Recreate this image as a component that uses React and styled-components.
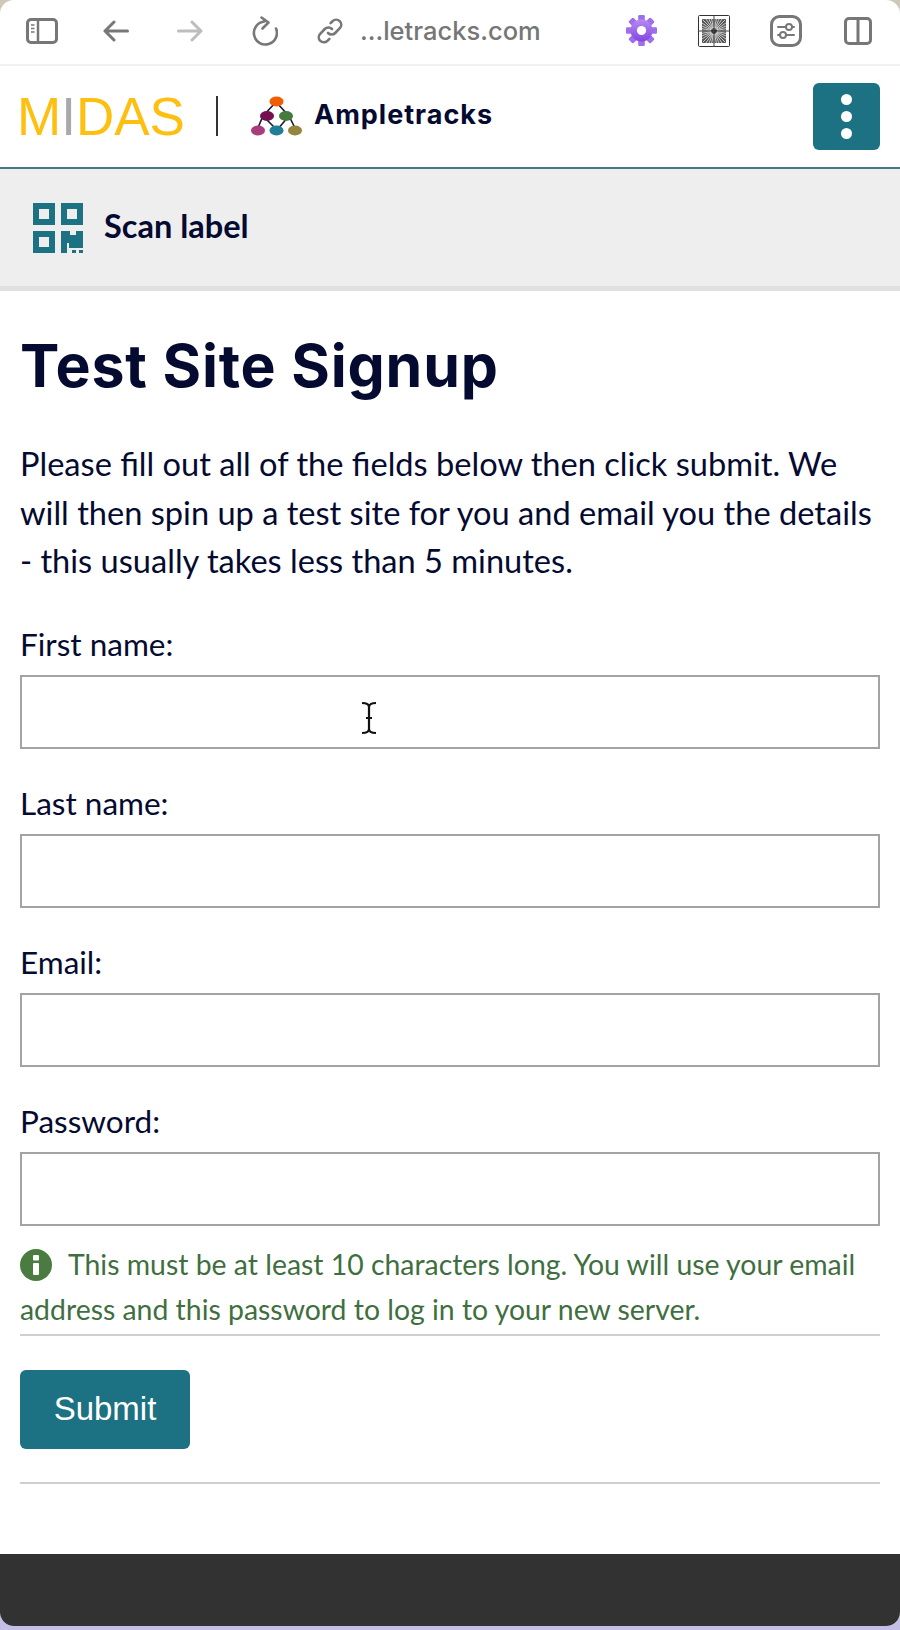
import React from "react";
import styled, { createGlobalStyle } from "styled-components";

const teal = "#1c7182";
const navy = "#050a30";

const GlobalStyle = createGlobalStyle`
  * { box-sizing: border-box; }
  html, body { margin: 0; padding: 0; height: 100%; }
  body {
    background: linear-gradient(to bottom, #cfc8b8 0, #cfd0cc 30px, #c4bfe6 1600px);
    font-family: Lato, sans-serif;
  }
`;

const Win = styled.div`
  width: 900px;
  height: 1626px;
  background: #fff;
  border-radius: 14px;
  overflow: hidden;
  display: flex;
  flex-direction: column;
`;

const Toolbar = styled.div`
  height: 66px;
  flex: none;
  display: flex;
  align-items: center;
  padding: 0 28px 3px 26px;
  border-bottom: 2px solid #f1f1f1;
`;

const ToolIcon = styled.svg`
  flex: none;
  margin-left: ${(p) => p.$gap || 0}px;
  display: block;
`;

const UrlText = styled.span`
  margin-left: 17px;
  font-family: Inter, sans-serif;
  font-size: 25.5px;
  font-weight: 500;
  color: #767676;
`;

const ToolRight = styled.div`
  margin-left: auto;
  display: flex;
  align-items: center;
`;

const Header = styled.header`
  height: 103px;
  flex: none;
  display: flex;
  align-items: center;
  padding: 0 20px 1px;
  border-bottom: 2px solid #3f7c86;
`;

const Midas = styled.div`
  font-family: "Liberation Sans", sans-serif;
  font-size: 53px;
  line-height: 1;
  color: #fdc010;
  width: 164px;
  margin-left: -3px;
  white-space: nowrap;
`;

const MidasI = styled.span`
  color: #a9a9a9;
`;

const Divider = styled.div`
  width: 2px;
  height: 40px;
  background: #333;
  margin-left: 35px;
`;

const LogoMark = styled.svg`
  margin-left: 33px;
  flex: none;
`;

const Brand = styled.span`
  margin-left: 12px;
  font-family: Inter, sans-serif;
  font-weight: 700;
  font-size: 27px;
  letter-spacing: 1px;
  margin-top: -3px;
  color: ${navy};
`;

const MenuButton = styled.button`
  margin-left: auto;
  width: 67px;
  height: 67px;
  border: 0;
  border-radius: 6px;
  background: ${teal};
  display: flex;
  flex-direction: column;
  align-items: center;
  justify-content: center;
  gap: 6px;
  padding: 0;
`;

const Dot = styled.span`
  width: 11px;
  height: 11px;
  border-radius: 50%;
  background: #fff;
`;

const ScanBar = styled.div`
  height: 122px;
  flex: none;
  background: #eeeeef;
  border-bottom: 5px solid #e0e0e0;
  display: flex;
  align-items: center;
  gap: 21px;
  padding: 0 33px 0;
`;

const ScanText = styled.span`
  font-size: 32.5px;
  font-weight: 700;
  margin-top: -4px;
  color: ${navy};
`;

const Main = styled.main`
  flex: 1;
  padding: 0 20px;
  display: flex;
  flex-direction: column;
`;

const Title = styled.h1`
  margin: 37px 0 0;
  font-family: Inter, sans-serif;
  font-size: 59px;
  line-height: 76px;
  font-weight: 700;
  letter-spacing: 0.8px;
  color: ${navy};
  white-space: nowrap;
`;

const Intro = styled.p`
  margin: 36px 0 0;
  font-size: 32.6px;
  line-height: 48.6px;
  color: ${navy};
`;

const Field = styled.div`
  margin-top: ${(p) => p.$top}px;
  display: flex;
  flex-direction: column;
  position: relative;
`;

const Label = styled.label`
  font-size: 31.5px;
  line-height: 40px;
  color: ${navy};
  margin-bottom: 11px;
`;

const Input = styled.input`
  width: 100%;
  height: 74px;
  border: 2px solid #a3a3a3;
  background: #fff;
  display: block;
`;

const Cursor = styled.svg`
  position: absolute;
  left: 340px;
  top: 77px;
`;

const Hint = styled.div`
  margin-top: 16px;
  font-size: 28.4px;
  line-height: 45px;
  color: #3f6f3f;
`;

const HintIcon = styled.svg`
  display: inline-block;
  vertical-align: -6px;
  margin-right: 16px;
`;

const Rule = styled.hr`
  margin: ${(p) => p.$top}px 0 0;
  border: 0;
  height: 2px;
  background: #cfcfcf;
`;

const Submit = styled.button`
  margin-top: 34px;
  width: 170px;
  height: 79px;
  border: 0;
  border-radius: 6px;
  background: ${teal};
  color: #fff;
  font-family: "Liberation Sans", sans-serif;
  font-size: 33px;
  padding: 0;
`;

const Footer = styled.footer`
  height: 72px;
  flex: none;
  background: #323232;
`;

const stroke = { fill: "none", stroke: "#777", strokeWidth: 3, strokeLinecap: "round", strokeLinejoin: "round" };

function NoiseIcon() {
  const rays = [];
  for (let i = 0; i < 32; i++) {
    const a = (i / 32) * Math.PI * 2;
    rays.push(
      <line
        key={i}
        x1={16 + Math.cos(a) * 3}
        y1={16 + Math.sin(a) * 3}
        x2={16 + Math.cos(a) * 16}
        y2={16 + Math.sin(a) * 16}
        stroke="#e8e8e8"
        strokeWidth="0.8"
      />
    );
  }
  return (
    <ToolIcon width="32" height="32" viewBox="0 0 32 32" $gap={41}>
      <rect x="0.5" y="0.5" width="31" height="31" rx="1" fill="#fff" stroke="#333" />
      <rect x="4" y="4" width="24" height="24" fill="#555" />
      <svg x="4" y="4" width="24" height="24" viewBox="4 4 24 24">
        {rays}
      </svg>
      <path d="M12.5 15h7l-3.5 4z" fill="#222" />
      <path d="M16 0v32M0 16h32" stroke="#444" strokeWidth="1" />
    </ToolIcon>
  );
}

function GearIcon() {
  const teeth = [];
  for (let i = 0; i < 8; i++) {
    teeth.push(<rect key={i} x="12.2" y="0" width="6.6" height="7" rx="1.2" fill="#a06eea" transform={`rotate(${i * 45} 15.5 15.5)`} />);
  }
  return (
    <ToolIcon width="31" height="31" viewBox="0 0 31 31">
      <defs>
        <linearGradient id="gearFill" x1="0" y1="0" x2="0" y2="1">
          <stop offset="0" stopColor="#b48cf0" />
          <stop offset="1" stopColor="#8544e4" />
        </linearGradient>
      </defs>
      {teeth}
      <circle cx="15.5" cy="15.5" r="11" fill="url(#gearFill)" />
      <circle cx="15.5" cy="15.5" r="4.6" fill="#fff" />
    </ToolIcon>
  );
}

export default function App() {
  return (
    <>
      <GlobalStyle />
      <Win>
        <Toolbar>
          <ToolIcon width="32" height="26" viewBox="0 0 32 26">
            <rect x="1.5" y="1.5" width="29" height="23" rx="3.5" {...stroke} />
            <path d="M12 2v22" {...stroke} strokeWidth="2.5" />
            <path d="M5 7h3.5M5 10.5h3.5M5 14h3.5" stroke="#777" strokeWidth="1.6" />
          </ToolIcon>
          <ToolIcon width="26" height="22" viewBox="0 0 26 22" $gap={45}>
            <path d="M24.5 11H2M11 2l-9 9 9 9" {...stroke} />
          </ToolIcon>
          <ToolIcon width="26" height="22" viewBox="0 0 26 22" $gap={48}>
            <path d="M1.5 11H24M15 2l9 9-9 9" {...stroke} stroke="#bdbdbd" />
          </ToolIcon>
          <ToolIcon width="26" height="30" viewBox="0 0 26 30" $gap={49}>
            <path d="M24 12.5A11.5 11.5 0 1 1 12.5 5.5M9.5 1.5l7 5-6 6" {...stroke} strokeWidth="2.6" />
          </ToolIcon>
          <ToolIcon width="26" height="26" viewBox="0 0 26 26" $gap={39}>
            <path d="M11 15a5 5 0 0 0 7.2 0l4.6-4.8a5 5 0 0 0-7.2-7l-2 2M15 11a5 5 0 0 0-7.2 0l-4.6 4.8a5 5 0 0 0 7.2 7l2-2" {...stroke} strokeWidth="2.6" />
          </ToolIcon>
          <UrlText>...letracks.com</UrlText>
          <ToolRight>
            <GearIcon />
            <NoiseIcon />
            <ToolIcon width="32" height="32" viewBox="0 0 32 32" $gap={40}>
              <rect x="1.5" y="1.5" width="29" height="29" rx="8" {...stroke} />
              <path d="M8 12h16M8 20h16" {...stroke} strokeWidth="2" />
              <circle cx="19" cy="12" r="3" fill="#fff" stroke="#777" strokeWidth="2" />
              <circle cx="13" cy="20" r="3" fill="#fff" stroke="#777" strokeWidth="2" />
            </ToolIcon>
            <ToolIcon width="28" height="28" viewBox="0 0 28 28" $gap={42}>
              <rect x="1.5" y="1.5" width="25" height="25" rx="3.5" {...stroke} />
              <path d="M14 2v24" {...stroke} />
            </ToolIcon>
          </ToolRight>
        </Toolbar>

        <Header>
          <Midas>
            M<MidasI>I</MidasI>DAS
          </Midas>
          <Divider />
          <LogoMark width="51" height="41" viewBox="0 0 51 41">
            <path d="M25 6L12 20 6 34M25 6l13 14 7 14M12 20l14 14M38 20L26 34" stroke="#1a1a2e" strokeWidth="1.6" fill="none" />
            <ellipse cx="25.5" cy="5.5" rx="7" ry="5" fill="#f25c05" />
            <ellipse cx="16" cy="20" rx="7" ry="5" fill="#75104f" />
            <ellipse cx="35" cy="20" rx="7" ry="5" fill="#477a3f" />
            <ellipse cx="7" cy="34.5" rx="7" ry="5" fill="#a83c7c" />
            <ellipse cx="25.5" cy="34.5" rx="7" ry="5" fill="#1f7f96" />
            <ellipse cx="44" cy="34.5" rx="7" ry="5" fill="#96853e" />
          </LogoMark>
          <Brand>Ampletracks</Brand>
          <MenuButton aria-label="Menu">
            <Dot />
            <Dot />
            <Dot />
          </MenuButton>
        </Header>

        <ScanBar>
          <svg width="50" height="50" viewBox="0 0 50 50">
            <path fillRule="evenodd" fill={teal} d="M0 0h22v22H0zM6 6v10h10V6zM28 0h22v22H28zM34 6v10h10V6zM0 28h22v22H0zM6 34v10h10V34z" />
            <path fill={teal} d="M28 28h9v4h6v-4h7v17H36v-5h-2v10h-6z" />
            <path fill={teal} d="M39 47h4v3h-4zM46 47h4v3h-4z" />
          </svg>
          <ScanText>Scan label</ScanText>
        </ScanBar>

        <Main>
          <Title>Test Site Signup</Title>
          <Intro>
            Please fill out all of the fields below then click submit. We will then spin up a test site for you and
            email you the details - this usually takes less than 5 minutes.
          </Intro>
          <Field $top={38}>
            <Label>First name:</Label>
            <Input />
            <Cursor width="18" height="34" viewBox="0 0 18 34">
              <path d="M2 2c4 0 7 1 7 4v22c0 3-3 4-7 4M16 2c-4 0-7 1-7 4v22c0 3 3 4 7 4M6 17h6" fill="none" stroke="#111" strokeWidth="2.2" />
            </Cursor>
          </Field>
          <Field $top={34}>
            <Label>Last name:</Label>
            <Input />
          </Field>
          <Field $top={34}>
            <Label>Email:</Label>
            <Input />
          </Field>
          <Field $top={34}>
            <Label>Password:</Label>
            <Input />
          </Field>
          <Hint>
            <HintIcon width="32" height="32" viewBox="0 0 32 32">
              <circle cx="16" cy="16" r="16" fill="#4a7c42" />
              <rect x="13" y="6" width="6" height="5.5" rx="1" fill="#fff" />
              <rect x="13" y="14" width="6" height="12" rx="1" fill="#fff" />
            </HintIcon>
            This must be at least 10 characters long. You will use your email address and this password to log in to
            your new server.
          </Hint>
          <Rule $top={2} />
          <Submit>Submit</Submit>
          <Rule $top={33} />
        </Main>
        <Footer />
      </Win>
    </>
  );
}
